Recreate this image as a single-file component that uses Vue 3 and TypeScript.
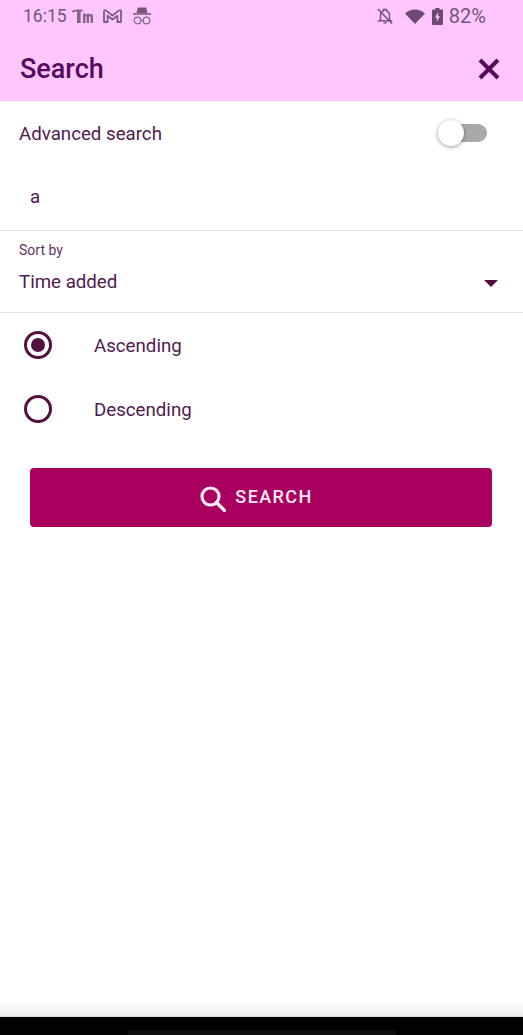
<script setup lang="ts">
</script>

<template>
  <div class="screen">
    <header class="appbar">
      <div class="status">
        <div class="status-left">
          <span class="time">16:15</span>
          <svg class="ic tm" width="21" height="14" viewBox="0 0 21 14">
            <path d="M0.500 3C2 1.200 4 1.500 6 1.500h4.500" fill="none" stroke="#85658a" stroke-width="2.200"/>
            <path d="M5 2v12h3.600V2zM11 4.500h2.600V6c1.600-2 3.600-2 4.400-.6 1.600-1 3-.2 3 1.800V14h-2.400V7.500h-1.600V14h-2.400V7.500h-1.200V14H11z" fill="#85658a"/>
          </svg>
          <svg class="ic gm" width="19" height="14" viewBox="0 0 19 14">
            <path d="M1 13V2.200c0-1.200 1-1.400 1.800-.8L9.500 6.500l6.700-5.100c.8-.6 1.800-.4 1.800.8V13h-3.600V6.800L9.500 10.500 4.600 6.800V13z" fill="none" stroke="#7d5d82" stroke-width="1.800" stroke-linejoin="round"/>
          </svg>
          <svg class="ic spy" width="18" height="18" viewBox="0 0 18 18">
            <path d="M4.800 0.500h8.400L14.500 6h-11z" fill="#75567a"/>
            <path d="M0 7h18" stroke="#75567a" stroke-width="1.500"/>
            <circle cx="4.500" cy="13.500" r="3.300" fill="none" stroke="#85658a" stroke-width="1.200"/>
            <circle cx="13.500" cy="13.500" r="3.300" fill="none" stroke="#85658a" stroke-width="1.200"/>
            <path d="M7.800 13.500h2.400" stroke="#85658a" stroke-width="1.200"/>
          </svg>
        </div>
        <div class="status-right">
          <svg class="ic" width="16" height="16" viewBox="0 0 16 16">
            <path d="M3.500 11.500V7.200a4.500 4.500 0 0 1 3-4.300V1.500h3v1.400a4.500 4.500 0 0 1 3 4.300v4.300l1.500 1.300H2zM6.500 14.800h3" fill="none" stroke="#75567a" stroke-width="1.500"/>
            <path d="M1 1l14 14.500" stroke="#75567a" stroke-width="1.600"/>
          </svg>
          <svg class="ic wifi" width="20" height="15" viewBox="0 0 20 15">
            <path d="M0 4.500C5.500 -0.800 14.500 -0.800 20 4.500L10 15z" fill="#6b4c70"/>
          </svg>
          <svg class="ic batt" width="11" height="17" viewBox="0 0 11 17">
            <path d="M3.500 0h4v1.500H10a1 1 0 0 1 1 1V16a1 1 0 0 1-1 1H1a1 1 0 0 1-1-1V2.500a1 1 0 0 1 1-1h2.500z" fill="#6b4c70"/>
            <path d="M6.200 4L3 9.800h2L4.600 14 8 8.200H6z" fill="#ffc5fd"/>
          </svg>
          <span class="pct">82%</span>
        </div>
      </div>
      <div class="titlebar">
        <h1 class="title">Search</h1>
        <svg class="close" width="22" height="22" viewBox="0 0 22 22">
          <path d="M2 2l18 18M20 2L2 20" stroke="#560a5c" stroke-width="4" fill="none"/>
        </svg>
      </div>
    </header>

    <main class="content">
      <div class="adv-row">
        <span class="adv-label">Advanced search</span>
        <span class="switch"><span class="track"></span><span class="thumb"></span></span>
      </div>
      <div class="query">a</div>
      <div class="sort">
        <div class="sort-label">Sort by</div>
        <div class="sort-value">
          <span>Time added</span>
          <span class="caret"></span>
        </div>
      </div>
      <div class="radios">
        <div class="radio-row">
          <span class="radio on"><span class="dot"></span></span>
          <span class="radio-text">Ascending</span>
        </div>
        <div class="radio-row">
          <span class="radio"></span>
          <span class="radio-text">Descending</span>
        </div>
      </div>
      <button class="search-btn" type="button">
        <svg class="search-ic" width="26" height="26" viewBox="0 0 26 26">
          <circle cx="10.500" cy="10.500" r="8.500" fill="none" stroke="#fbeaf3" stroke-width="3.200"/>
          <path d="M16.500 16.500l8 8" stroke="#fbeaf3" stroke-width="3.400" stroke-linecap="round"/>
        </svg>
        <span>SEARCH</span>
      </button>
    </main>

    <div class="fade"></div>
    <footer class="navbar"><span class="pill"></span></footer>
  </div>
</template>

<style>
html, body { margin: 0; background: #fff; }
</style>

<style scoped>
.screen {
  width: 523px;
  height: 1035px;
  display: flex;
  flex-direction: column;
  overflow: hidden;
  background: #fff;
  font-family: Roboto, "Liberation Sans", sans-serif;
  color: #4f1a4d;
}
.appbar {
  height: 101px;
  flex: none;
  background: #ffc5fd;
  display: flex;
  flex-direction: column;
}
.status {
  height: 34px;
  box-sizing: border-box;
  padding: 0 37px 2px 23px;
  display: flex;
  justify-content: space-between;
  align-items: center;
  color: #75567a;
}
.status-left, .status-right { display: flex; align-items: center; }
.ic { display: block; flex: none; }
.time { font-size: 17.500px; width: 49px; }
.gm { margin-left: 10px; }
.spy { margin-left: 11px; }
.wifi { margin-left: 12px; }
.batt { margin-left: 7px; }
.pct { margin-left: 6px; font-size: 20px; }
.titlebar {
  flex: 1;
  padding: 2px 23px 0 20px;
  display: flex;
  justify-content: space-between;
  align-items: center;
}
.title {
  margin: 0;
  font-size: 27px;
  font-weight: 500;
  color: #560a5c;
}
.content { flex: 1; display: flex; flex-direction: column; }
.adv-row {
  height: 64px;
  padding: 0 36px 0 19px;
  display: flex;
  justify-content: space-between;
  align-items: center;
  font-size: 18.700px;
}
.adv-label { padding-top: 2px; }
.switch { position: relative; width: 49px; height: 28px; display: block; }
.track {
  position: absolute;
  left: 5px; right: 0; top: 5px;
  height: 18px;
  border-radius: 9px;
  background: #a9a9a9;
}
.thumb {
  position: absolute;
  left: 0; top: 1px;
  width: 26px; height: 26px;
  border-radius: 50%;
  background: #fff;
  box-shadow: 0 1px 4px rgba(0,0,0,.4);
}
.query {
  height: 66px;
  padding: 0 0 2px 30px;
  box-sizing: border-box;
  display: flex;
  align-items: center;
  font-size: 18.700px;
  border-bottom: 1px solid #e2e2e2;
}
.sort {
  height: 82px;
  box-sizing: border-box;
  padding: 11px 25px 0 19px;
  border-bottom: 1px solid #e2e2e2;
}
.sort-label { font-size: 14px; line-height: 16px; color: #5f3560; }
.sort-value {
  margin-top: 12px;
  display: flex;
  justify-content: space-between;
  align-items: center;
  font-size: 18.700px;
  line-height: 24px;
}
.caret {
  width: 0; height: 0;
  border-left: 7px solid transparent;
  border-right: 7px solid transparent;
  border-top: 7px solid #560a3f;
  margin-top: 3px;
}
.radios { display: flex; flex-direction: column; }
.radio-row {
  height: 64px;
  padding-left: 24px;
  display: flex;
  align-items: center;
  font-size: 18.700px;
}
.radio {
  width: 28px; height: 28px;
  box-sizing: border-box;
  border: 3px solid #54103f;
  border-radius: 50%;
  display: flex;
  align-items: center;
  justify-content: center;
  flex: none;
}
.dot { width: 14px; height: 14px; border-radius: 50%; background: #54103f; }
.radio-text { margin-left: 42px; padding-top: 1px; }
.search-btn {
  margin: 27px 0 0 30px;
  width: 462px;
  height: 59px;
  border: none;
  border-radius: 4px;
  background: #a9005f;
  color: #fbeaf3;
  font-family: inherit;
  font-size: 18px;
  font-weight: 500;
  letter-spacing: 1.400px;
  display: flex;
  align-items: center;
  justify-content: center;
  gap: 9px;
  padding: 0 9px 2px 0;
}
.search-ic { margin-top: 5px; }
.fade {
  margin-top: auto;
  height: 15px;
  flex: none;
  background: linear-gradient(#fff, #ececec);
  border-bottom: 1px solid #ddd;
}
.navbar {
  height: 18px;
  flex: none;
  background: #020202;
  display: flex;
  justify-content: center;
  align-items: flex-end;
}
.pill {
  width: 268px;
  height: 5px;
  background: #0e0e0e;
}
</style>
